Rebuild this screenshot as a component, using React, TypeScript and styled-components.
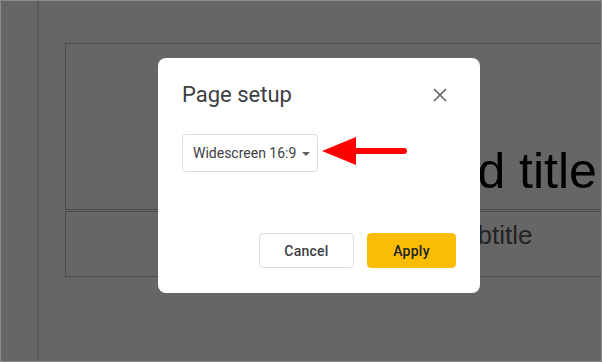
import React from "react";
import styled, { createGlobalStyle } from "styled-components";

const Global = createGlobalStyle`
  html, body { margin: 0; padding: 0; }
  body { width: 602px; height: 362px; overflow: hidden; font-family: Roboto, "Liberation Sans", Arial, sans-serif; }
  * { box-sizing: border-box; }
`;

const Screen = styled.div`
  position: relative;
  width: 602px;
  height: 362px;
  border: 1px solid #8c8c8c;
  background: #ffffff;
  display: flex;
  overflow: hidden;
`;

const Filmstrip = styled.div`
  width: 38px;
  flex: none;
  border-right: 2px solid #e2e2e2;
`;

const Canvas = styled.div`
  flex: 1;
  padding: 42px 0 0 26px;
  display: flex;
  flex-direction: column;
  overflow: hidden;
`;

const Placeholder = styled.div<{ $h: number; $pl: number; $size: number; $color: string; $align: string }>`
  height: ${(p) => p.$h}px;
  width: 700px;
  flex: none;
  border: 1px solid #bdbdbd;
  display: flex;
  align-items: ${(p) => p.$align};
  padding-left: ${(p) => p.$pl}px;
  font-family: "Liberation Sans", Arial, sans-serif;
  font-size: ${(p) => p.$size}px;
  color: ${(p) => p.$color};
  white-space: nowrap;
`;

const TitleText = styled.span`
  line-height: 1;
  margin-bottom: 13px;
`;

const SubText = styled.span`
  line-height: 1;
  margin-top: 10px;
`;

const Overlay = styled.div`
  position: absolute;
  inset: 0;
  background: rgba(0, 0, 0, 0.6);
  display: flex;
  align-items: flex-start;
  padding: 57px 0 0 157px;
`;

const Dialog = styled.div`
  position: relative;
  width: 322px;
  height: 235px;
  background: #fff;
  border-radius: 8px;
  padding: 22px 24px 25px 24px;
  display: flex;
  flex-direction: column;
`;

const Header = styled.div`
  height: 30px;
  display: flex;
  align-items: center;
  justify-content: space-between;
`;

const Title = styled.h2`
  margin: 0;
  font-family: Roboto, "Open Sans", sans-serif;
  font-weight: 400;
  font-size: 22px;
  line-height: 30px;
  color: #3c4043;
`;

const CloseButton = styled.button`
  width: 24px;
  height: 24px;
  margin-right: 4px;
  padding: 0;
  border: none;
  background: none;
  display: flex;
  align-items: center;
  justify-content: center;
`;

const Select = styled.div`
  margin-top: 24px;
  width: 136px;
  height: 38px;
  border: 1px solid #dadce0;
  border-radius: 4px;
  display: flex;
  align-items: center;
  padding: 0 10px 0 10px;
  gap: 6px;
  font-size: 14px;
  color: #3c4043;
  white-space: nowrap;
`;

const Caret = styled.span`
  width: 0;
  height: 0;
  border-left: 4px solid transparent;
  border-right: 4px solid transparent;
  border-top: 4px solid #5f6368;
  margin-top: 1px;
`;

const Actions = styled.div`
  margin-top: auto;
  display: flex;
  justify-content: flex-end;
  gap: 13px;
`;

const Button = styled.button<{ $primary?: boolean }>`
  height: 35px;
  width: ${(p) => (p.$primary ? 89 : 95)}px;
  border-radius: 4px;
  border: 1px solid ${(p) => (p.$primary ? "#fbbc04" : "#dadce0")};
  background: ${(p) => (p.$primary ? "#fbbc04" : "#fff")};
  color: ${(p) => (p.$primary ? "#202124" : "#3c4043")};
  font-family: Roboto, sans-serif;
  font-size: 14px;
  font-weight: 500;
  letter-spacing: 0.25px;
  padding: 0;
`;

const Annotation = styled.svg`
  position: absolute;
  left: 163px;
  top: 77px;
`;

export default function App() {
  return (
    <>
      <Global />
      <Screen>
        <Filmstrip />
        <Canvas>
          <Placeholder $h={167} $pl={178} $size={50} $color="#000" $align="flex-end">
            <TitleText>Click to add title</TitleText>
          </Placeholder>
          <Placeholder $h={66} $pl={241} $size={26} $color="#595959" $align="flex-start" style={{ marginTop: 1 }}>
            <SubText>Click to add subtitle</SubText>
          </Placeholder>
        </Canvas>
        <Overlay>
          <Dialog>
            <Header>
              <Title>Page setup</Title>
              <CloseButton aria-label="Close">
                <svg width="14" height="14" viewBox="0 0 14 14">
                  <path d="M1 1L13 13M13 1L1 13" stroke="#5f6368" strokeWidth="1.6" />
                </svg>
              </CloseButton>
            </Header>
            <Select>
              <span>Widescreen 16:9</span>
              <Caret />
            </Select>
            <Actions>
              <Button>Cancel</Button>
              <Button $primary>Apply</Button>
            </Actions>
            <Annotation width="90" height="32" viewBox="0 0 90 32">
              <polygon points="1,16 35,2 35,30" fill="#ff0000" />
              <line x1="33" y1="16" x2="83" y2="16" stroke="#ff0000" strokeWidth="6" strokeLinecap="round" />
            </Annotation>
          </Dialog>
        </Overlay>
      </Screen>
    </>
  );
}
